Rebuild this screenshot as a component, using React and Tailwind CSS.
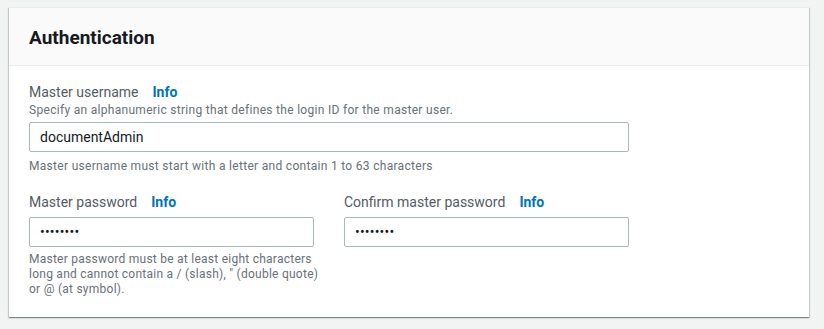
function Label({ children }) {
  return (
    <div className="flex items-baseline h-[20px] leading-[20px] text-[14px]">
      <span className="text-[#545b64]">{children}</span>
      <span className="ml-[14px] font-bold text-[#0073bb]">Info</span>
    </div>
  );
}

function Field({ children, dots }) {
  return (
    <div className="h-[30px] w-full rounded-[2px] border border-[#aab7b8] bg-white px-[10px] flex items-center">
      {dots ? (
        <span className="text-[14px] leading-none text-[#16191f] tracking-[0.2px]">••••••••</span>
      ) : (
        <span className="text-[14px] text-[#16191f]">{children}</span>
      )}
    </div>
  );
}

export default function App() {
  return (
    <div className="min-h-screen bg-[#f2f3f3] pt-[7px] pl-[9px] font-['Roboto',sans-serif]">
      <div className="w-[800px] bg-white border-t border-[#eaeded] shadow-[0_1px_1px_0_rgba(0,28,36,0.3),1px_1px_1px_0_rgba(0,28,36,0.15),-1px_1px_1px_0_rgba(0,28,36,0.15)]">
        <div className="h-[58px] bg-[#fafafa] border-b border-[#eaeded] px-5 pt-[3px] flex items-center">
          <h2 className="text-[19px] font-bold text-[#16191f]">Authentication</h2>
        </div>

        <div className="px-5 pt-[16px] pb-[20px] w-[640px]">
          <Label>Master username</Label>
          <p className="text-[12px] leading-[16px] tracking-[0.3px] text-[#687078]">
            Specify an alphanumeric string that defines the login ID for the master user.
          </p>
          <div className="mt-[4px]">
            <Field>documentAdmin</Field>
          </div>
          <p className="mt-[6px] text-[12px] leading-[16px] tracking-[0.3px] text-[#687078]">
            Master username must start with a letter and contain 1 to 63 characters
          </p>

          <div className="mt-[18px] grid grid-cols-2 gap-[30px]">
            <div>
              <Label>Master password</Label>
              <div className="mt-[5px]">
                <Field dots />
              </div>
              <p className="mt-[5px] w-[292px] text-[12px] leading-[15px] tracking-[0.25px] text-[#687078]">
                Master password must be at least eight characters long and cannot contain a / (slash), " (double quote) or @ (at symbol).
              </p>
            </div>
            <div>
              <Label>Confirm master password</Label>
              <div className="mt-[5px]">
                <Field dots />
              </div>
            </div>
          </div>
        </div>
      </div>
    </div>
  );
}
